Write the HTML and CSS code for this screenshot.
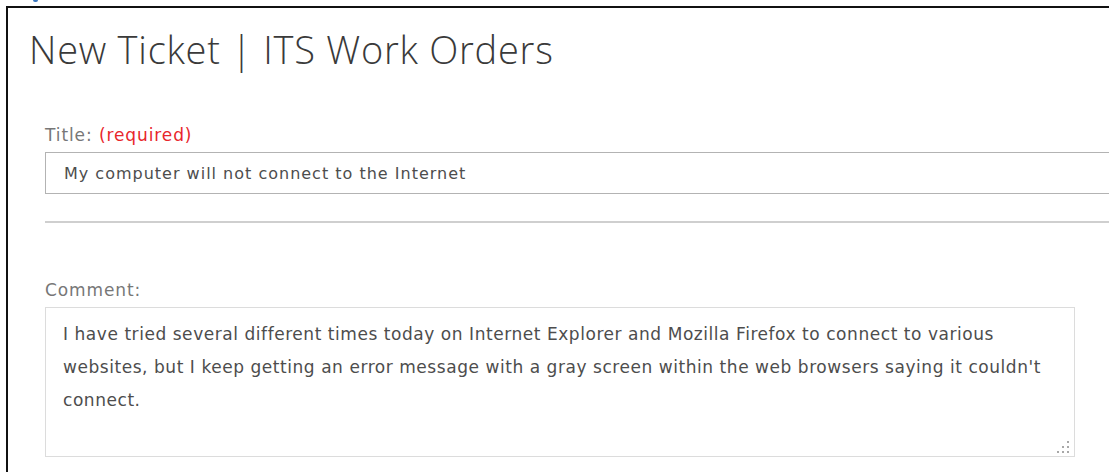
FILE: index.html
```html
<!DOCTYPE html>
<html lang="en">
<head>
<meta charset="utf-8">
<title>New Ticket | ITS Work Orders</title>
<link rel="stylesheet" href="styles.css">
</head>
<body>
  <div class="caption"><span class="caption-tail"></span></div>
  <div class="frame">
    <h1 class="page-title">New Ticket | ITS Work Orders</h1>
    <form class="ticket-form">
      <div class="field">
        <label class="field-label" for="title">Title: <span class="required">(required)</span></label>
        <input class="text-input" id="title" type="text" value="My computer will not connect to the Internet">
      </div>
      <hr class="divider">
      <div class="field field-comment">
        <label class="field-label" for="comment">Comment:</label>
        <div class="textarea-wrap">
          <textarea class="text-area" id="comment">I have tried several different times today on Internet Explorer and Mozilla Firefox to connect to various websites, but I keep getting an error message with a gray screen within the web browsers saying it couldn't connect.</textarea>
          <svg class="grip" width="12" height="12" viewBox="0 0 12 12" aria-hidden="true">
            <rect x="10" y="0" width="2" height="2"/>
            <rect x="5" y="5" width="2" height="2"/>
            <rect x="10" y="5" width="2" height="2"/>
            <rect x="0" y="10" width="2" height="2"/>
            <rect x="5" y="10" width="2" height="2"/>
            <rect x="10" y="10" width="2" height="2"/>
          </svg>
        </div>
      </div>
    </form>
  </div>
</body>
</html>
```
FILE: styles.css
```css
html, body {
  margin: 0;
  padding: 0;
  background: #ffffff;
  overflow: hidden;
}

body {
  width: 1109px;
  height: 472px;
}

/* tail of the caption line above the frame */
.caption {
  height: 6px;
  padding-left: 33px;
}

.caption-tail {
  display: block;
  width: 5px;
  height: 2px;
  background: #3b78c0;
  border-radius: 0 0 3px 3px;
}

/* framed page area, open on the right and bottom */
.frame {
  margin-left: 6px;
  width: calc(100% - 6px);
  height: 466px;
  box-sizing: border-box;
  overflow: hidden;
  border-top: 2px solid #111111;
  border-left: 2px solid #111111;
  padding: 21px 0 0 21px;
}

.page-title {
  margin: 0;
  font-family: "Open Sans", sans-serif;
  font-weight: 300;
  font-size: 38px;
  line-height: 40px;
  color: #3a3a3a;
  letter-spacing: 0.75px;
}

.ticket-form {
  padding: 0 0 0 16px;
  margin-top: 57px;
}

.field-label {
  display: block;
  font-family: "DejaVu Sans", sans-serif;
  font-size: 17px;
  line-height: 18px;
  letter-spacing: 0.9px;
  font-weight: 400;
  color: #777777;
  margin-bottom: 8px;
}

.required {
  color: #e8262b;
}

.text-input {
  display: block;
  box-sizing: border-box;
  width: 1120px;
  height: 42px;
  margin: 0;
  padding: 0 18px;
  border: 1px solid #b3b3b3;
  border-radius: 0;
  font-family: "DejaVu Sans", sans-serif;
  font-size: 16px;
  letter-spacing: 1px;
  color: #4d4d4d;
  background: #ffffff;
}

.divider {
  margin: 27px 0 0 0;
  width: 1120px;
  height: 0;
  border: 0;
  border-top: 2px solid #cfcfcf;
}

.field-comment {
  margin-top: 58px;
}

.textarea-wrap {
  position: relative;
  width: 1030px;
}

.text-area {
  display: block;
  box-sizing: border-box;
  width: 1030px;
  height: 150px;
  margin: 0;
  padding: 10px 14px 0 17px;
  border: 1px solid #dcdcdc;
  border-radius: 0;
  resize: none;
  overflow: hidden;
  font-family: "DejaVu Sans", sans-serif;
  font-size: 17px;
  letter-spacing: 0.55px;
  line-height: 33px;
  color: #4d4d4d;
  background: #ffffff;
}

.grip {
  position: absolute;
  right: 6px;
  bottom: 4px;
  fill: #a8a8a8;
}
```
